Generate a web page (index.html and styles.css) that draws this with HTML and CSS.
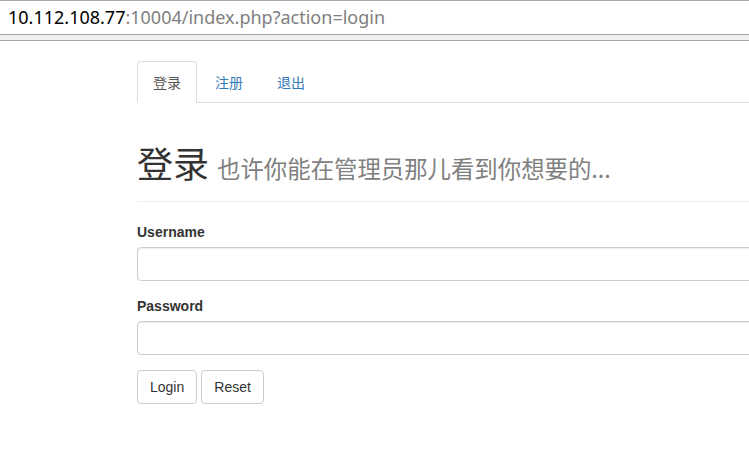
FILE: index.html
```html
<!DOCTYPE html>
<html lang="zh-CN">
<head>
<meta charset="utf-8">
<title>login</title>
<link rel="stylesheet" href="styles.css">
</head>
<body>
<div class="urlbar"><span class="host">10.112.108.77</span><span class="rest">:10004/index.php?action=login</span></div>
<div class="chrome-band"></div>
<div class="page">
  <div class="container">
    <ul class="nav-tabs">
      <li class="tab active"><a>登录</a></li>
      <li class="tab"><a>注册</a></li>
      <li class="tab"><a>退出</a></li>
    </ul>
    <div class="page-header">
      <h1>登录 <small>也许你能在管理员那儿看到你想要的...</small></h1>
    </div>
    <form class="form">
      <div class="form-group">
        <label>Username</label>
        <input class="form-control" type="text">
      </div>
      <div class="form-group">
        <label>Password</label>
        <input class="form-control" type="password">
      </div>
      <div class="actions">
        <button type="button" class="btn">Login</button>
        <button type="button" class="btn">Reset</button>
      </div>
    </form>
  </div>
</div>
</body>
</html>
```

FILE: styles.css
```css
html, body {
  margin: 0;
  padding: 0;
  background: #fff;
  overflow: hidden;
}
body {
  font-family: "Liberation Sans", Arial, "Noto Sans CJK SC", sans-serif;
  font-size: 14px;
  line-height: 20px;
  color: #333;
}
.urlbar {
  height: 33px;
  border-top: 1px solid #a9a9a9;
  border-bottom: 1px solid #a0a0a0;
  box-sizing: content-box;
  padding-left: 8px;
  font-family: "Noto Sans", "Open Sans", sans-serif;
  font-size: 18px;
  line-height: 33px;
  white-space: nowrap;
}
.urlbar .host { color: #000; }
.urlbar .rest { color: #808080; }
.chrome-band {
  height: 5px;
  background: #f0f0f0;
  border-bottom: 1px solid #a8a8a8;
}
.page {
  padding-top: 20px;
}
.container {
  margin-left: 137px;
  width: 700px;
}
.nav-tabs {
  list-style: none;
  margin: 0;
  padding: 0;
  display: flex;
  border-bottom: 1px solid #ddd;
}
.tab {
  margin-right: 2px;
  margin-bottom: -1px;
}
.tab a {
  display: block;
  padding: 10px 15px;
  border: 1px solid transparent;
  border-radius: 4px 4px 0 0;
  color: #337ab7;
  font-family: "Noto Sans CJK SC", sans-serif;
  font-size: 14px;
  line-height: 20px;
}
.tab.active a {
  color: #555;
  background: #fff;
  border-color: #ddd #ddd transparent;
}
.page-header {
  margin: 40px 0 20px;
  padding-bottom: 9px;
  border-bottom: 1px solid #eee;
}
h1 {
  margin: 20px 0 10px;
  height: 39px;
  font-family: "Noto Sans CJK SC", sans-serif;
  font-weight: 400;
  font-size: 36px;
  line-height: 39px;
  color: #333;
}
h1 small {
  font-size: 65%;
  line-height: 1;
  color: #808080;
  font-weight: 400;
}
.form-group {
  margin-bottom: 15px;
}
label {
  display: block;
  margin-bottom: 5px;
  font-weight: 700;
  font-size: 14px;
  line-height: 20px;
}
.form-control {
  display: block;
  box-sizing: border-box;
  width: 100%;
  height: 34px;
  margin: 0;
  padding: 6px 12px;
  border: 1px solid #ccc;
  border-radius: 4px;
  box-shadow: inset 0 1px 1px rgba(0,0,0,.075);
  font: inherit;
  background: #fff;
}
.actions {
  display: flex;
  gap: 4px;
}
.btn {
  box-sizing: border-box;
  height: 34px;
  margin: 0;
  padding: 6px 12px;
  border: 1px solid #ccc;
  border-radius: 4px;
  background: #fff;
  color: #333;
  font-family: "Liberation Sans", Arial, sans-serif;
  font-size: 14px;
  line-height: 20px;
}
```
